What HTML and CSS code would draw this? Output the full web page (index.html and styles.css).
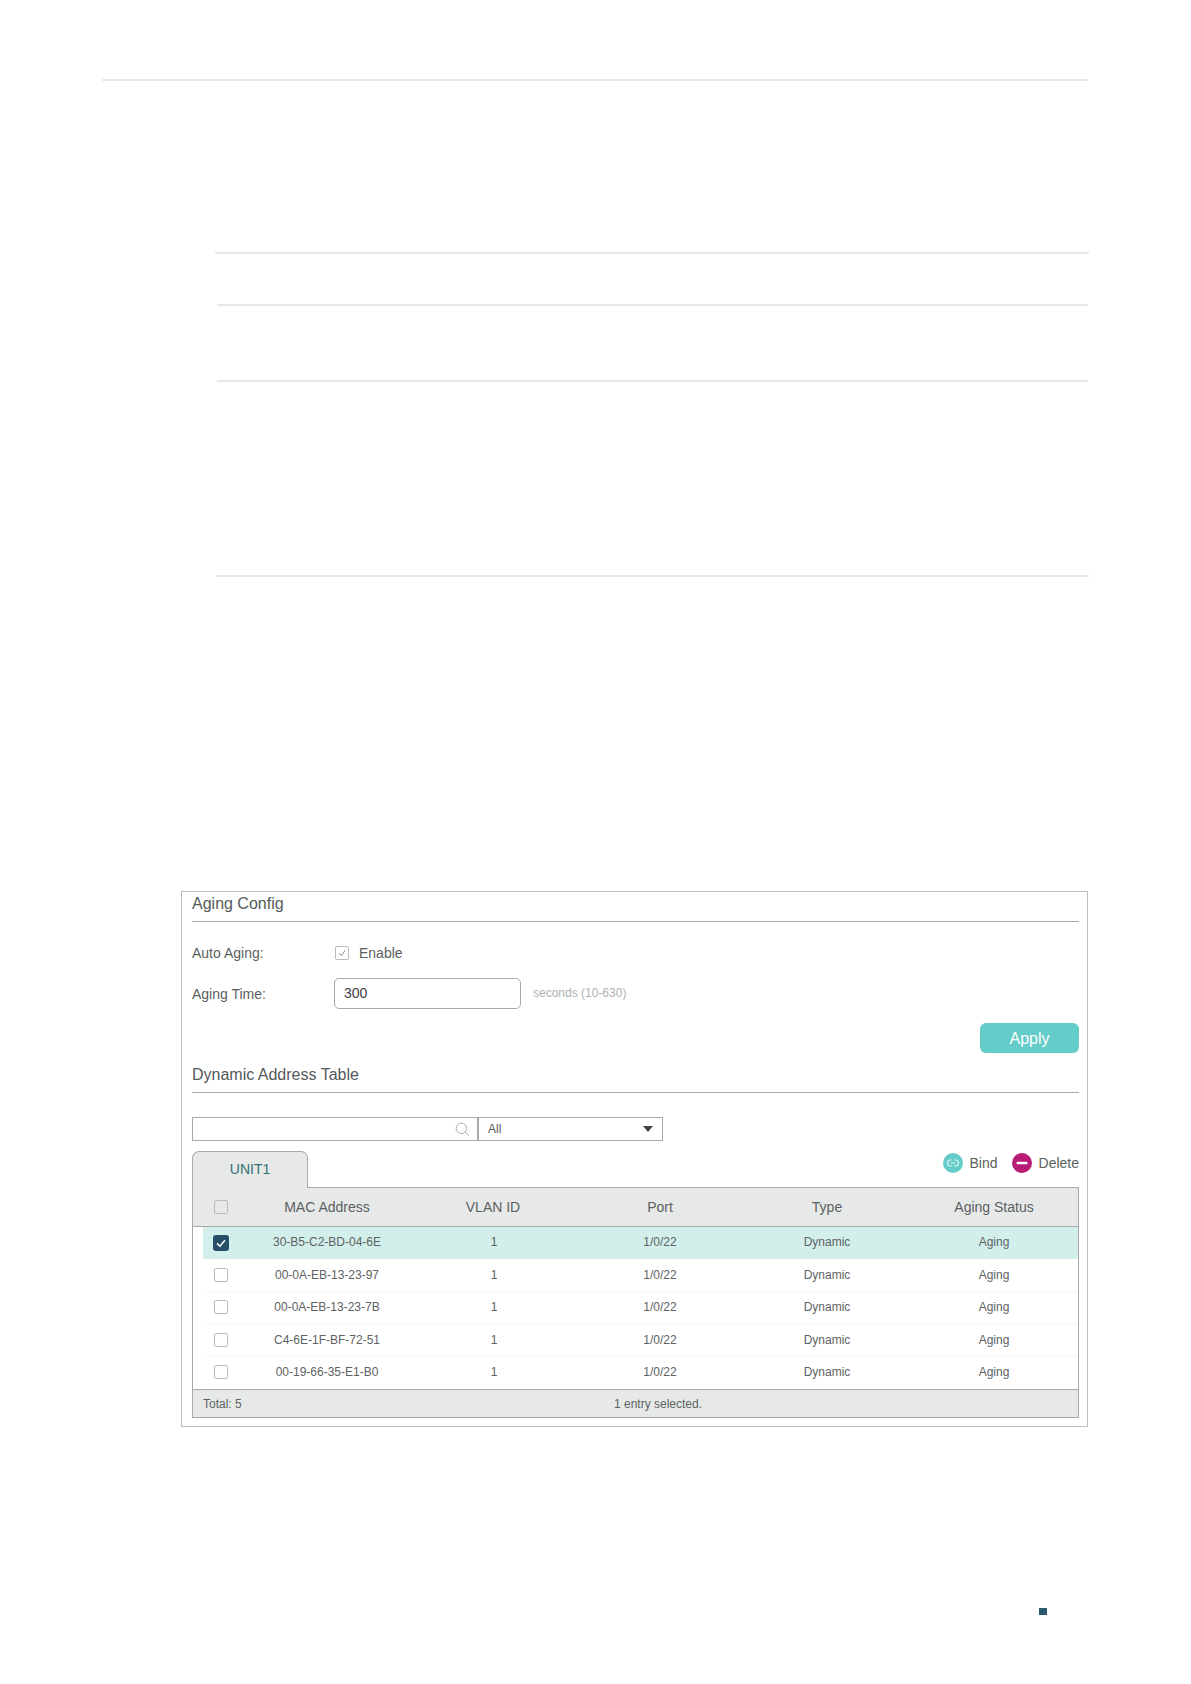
FILE: index.html
```html
<!DOCTYPE html>
<html lang="en">
<head>
<meta charset="utf-8">
<title>Aging Config</title>
<link rel="stylesheet" href="styles.css">
</head>
<body>
<div class="page">
  <div class="rule rule-top"></div>
  <div class="rule rule-a"></div>
  <div class="rule rule-b"></div>
  <div class="rule rule-c"></div>
  <div class="rule rule-d"></div>

  <section class="panel">
    <h2 class="title">Aging Config</h2>
    <div class="form-row auto-row">
      <span class="label">Auto Aging:</span>
      <span class="enable-box">
        <svg class="enable-check" viewBox="0 0 14 14"><path d="M3.5 7.2 6.2 10 10.8 3.8"/></svg>
      </span>
      <span class="enable-text">Enable</span>
    </div>
    <div class="form-row time-row">
      <span class="label">Aging Time:</span>
      <span class="input">300</span>
      <span class="hint">seconds (10-630)</span>
    </div>
    <div class="apply-row"><span class="apply">Apply</span></div>

    <h2 class="title title-second">Dynamic Address Table</h2>
    <div class="toolbar">
      <span class="search">
        <svg class="search-icon" viewBox="0 0 16 16"><circle cx="6.8" cy="6.8" r="5.6"/><path d="M10.8 10.8 15 15"/></svg>
      </span>
      <span class="select">All<span class="caret"></span></span>
    </div>
    <div class="tabs">
      <span class="tab">UNIT1</span>
      <div class="actions">
        <span class="action">
          <svg class="action-icon" viewBox="0 0 20 20"><circle class="bind-disc" cx="10" cy="10" r="10"/><path class="bind-link" d="M9 7H7.5a3 3 0 0 0 0 6H9M11 7h1.5a3 3 0 0 1 0 6H11M7.5 10h5"/></svg>
          Bind
        </span>
        <span class="action">
          <svg class="action-icon" viewBox="0 0 20 20"><circle class="delete-disc" cx="10" cy="10" r="10"/><rect class="delete-bar" x="4.5" y="8.8" width="11" height="2.4" rx="1"/></svg>
          Delete
        </span>
      </div>
    </div>

    <div class="table">
      <div class="row head">
        <span class="box"></span>
        <span>MAC Address</span><span>VLAN ID</span><span>Port</span><span>Type</span><span>Aging Status</span>
      </div>
      <div class="row body selected">
        <span class="box checked"><svg class="tick" viewBox="0 0 16 16"><path d="M4 8.4 6.9 11.2 12 5.2"/></svg></span>
        <span>30-B5-C2-BD-04-6E</span><span>1</span><span>1/0/22</span><span>Dynamic</span><span>Aging</span>
      </div>
      <div class="row body">
        <span class="box"></span>
        <span>00-0A-EB-13-23-97</span><span>1</span><span>1/0/22</span><span>Dynamic</span><span>Aging</span>
      </div>
      <div class="row body">
        <span class="box"></span>
        <span>00-0A-EB-13-23-7B</span><span>1</span><span>1/0/22</span><span>Dynamic</span><span>Aging</span>
      </div>
      <div class="row body">
        <span class="box"></span>
        <span>C4-6E-1F-BF-72-51</span><span>1</span><span>1/0/22</span><span>Dynamic</span><span>Aging</span>
      </div>
      <div class="row body last">
        <span class="box"></span>
        <span>00-19-66-35-E1-B0</span><span>1</span><span>1/0/22</span><span>Dynamic</span><span>Aging</span>
      </div>
      <div class="foot">
        <span>Total: 5</span><span>1 entry selected.</span>
      </div>
    </div>
  </section>

  <div class="page-mark"></div>
</div>
</body>
</html>
```
FILE: styles.css
```css
* { box-sizing: border-box; }

html, body { margin: 0; padding: 0; background: #fff; }

.page {
  width: 1191px;
  height: 1684px;
  padding-top: 79px;
  font-family: "Liberation Sans", Arial, sans-serif;
  color: #5a5f60;
  overflow: hidden;
}

.rule { height: 2px; background: #e4e8e8; }
.rule-top { margin-left: 102px; width: 986px; }
.rule-a { margin: 171px 0 0 215px; width: 874px; }
.rule-b { margin: 50px 0 0 217px; width: 871px; }
.rule-c { margin: 74px 0 0 217px; width: 871px; }
.rule-d { margin: 193px 0 0 216px; width: 873px; }

.panel {
  margin: 314px 0 0 181px;
  width: 907px;
  height: 536px;
  border: 1px solid #bbbcbc;
  padding: 0 8px 0 10px;
}

.title {
  margin: 0;
  height: 30px;
  font-size: 16px;
  font-weight: 400;
  line-height: 24px;
  color: #55595a;
  border-bottom: 1px solid #a9abab;
}
.title-second { margin-top: 10px; }

.form-row { display: flex; align-items: center; font-size: 14px; }
.label { width: 142px; flex: none; }
.auto-row { height: 20px; margin-top: 21px; }
.time-row { height: 31px; margin-top: 15px; }

.enable-box {
  width: 14px;
  height: 14px;
  margin-left: 1px;
  border: 1px solid #b7bbbb;
  border-radius: 2px;
}
.enable-check { display: block; width: 12px; height: 12px; fill: none; stroke: #6f7879; stroke-width: 1; }
.enable-text { margin-left: 10px; }

.input {
  width: 187px;
  height: 31px;
  padding-left: 9px;
  border: 1px solid #a8aaaa;
  border-radius: 5px;
  line-height: 29px;
  color: #3c4041;
}
.hint { margin: -2px 0 0 12px; font-size: 12px; color: #aeb1b1; }

.apply-row { display: flex; justify-content: flex-end; margin-top: 14px; }
.apply {
  width: 99px;
  height: 30px;
  border-radius: 6px;
  background: #64ccc9;
  color: #fff;
  font-size: 16px;
  line-height: 32px;
  text-align: center;
}

.toolbar { display: flex; margin-top: 24px; font-size: 12px; }
.search {
  display: flex;
  align-items: center;
  justify-content: flex-end;
  width: 286px;
  height: 24px;
  padding-right: 7px;
  border: 1px solid #a8aaaa;
}
.search-icon { width: 15px; height: 15px; fill: none; stroke: #a5a9a9; stroke-width: 1; }
.select {
  display: flex;
  align-items: center;
  justify-content: space-between;
  width: 185px;
  height: 24px;
  padding: 0 9px;
  border: 1px solid #a8aaaa;
  color: #55595a;
}
.caret {
  width: 0;
  height: 0;
  border-left: 5px solid transparent;
  border-right: 5px solid transparent;
  border-top: 6px solid #3d4344;
}

.tabs { display: flex; justify-content: space-between; margin-top: 10px; height: 36px; }
.tab {
  width: 116px;
  height: 37px;
  border: 1px solid #a8aaaa;
  border-bottom: 0;
  border-radius: 7px 7px 0 0;
  background: #e7e9e9;
  color: #2f7175;
  font-size: 14px;
  line-height: 35px;
  text-align: center;
  position: relative;
  z-index: 1;
}
.actions { display: flex; gap: 14px; padding-top: 2px; }
.action { display: flex; align-items: flex-start; gap: 7px; height: 20px; font-size: 14px; line-height: 20px; }
.action-icon { width: 20px; height: 20px; flex: none; }
.bind-disc { fill: #64ccc9; }
.bind-link { fill: none; stroke: #d6f2f1; stroke-width: 1.2; }
.delete-disc { fill: #b81c76; }
.delete-bar { fill: #fff; }

.table { width: 887px; border: 1px solid #a8aaaa; height: 231px; }

.row {
  display: grid;
  grid-template-columns: 56px 156px 176px 158px 176px 158px;
  align-items: center;
  text-align: center;
}
.head {
  height: 39px;
  background: #e7e9e9;
  border-bottom: 1px solid #a8aaaa;
  font-size: 14px;
}
.body {
  height: 32.4px;
  margin-left: 10px;
  grid-template-columns: 46px 156px 178px 154px 180px 154px;
  font-size: 12px;
  border-bottom: 1px solid #f5f7f7;
  color: #5d6263;
}
.body.last { border-bottom: 0; padding-bottom: 2px; }
.selected { background: #d2efeb; border-bottom: 0; padding-bottom: 2px; }

.box {
  display: block;
  width: 14px;
  height: 14px;
  margin-left: 21px;
  border: 1px solid #b9bcbc;
  border-radius: 2px;
  background: #fff;
}
.head .box { background: transparent; }
.body .box { margin-left: 11px; }
.body .box.checked {
  width: 16px;
  height: 16px;
  margin-left: 10px;
  border: 0;
  border-radius: 3px;
  background: #264e66;
}
.selected .box { margin-top: 2px; }
.tick { display: block; width: 16px; height: 16px; fill: none; stroke: #fff; stroke-width: 1.5; }

.foot {
  display: grid;
  grid-template-columns: 411px auto;
  align-items: center;
  height: 28px;
  padding: 2px 0 0 10px;
  background: #e7e9e9;
  border-top: 1px solid #a8aaaa;
  font-size: 12px;
  color: #5d6263;
}

.page-mark { margin: 181px 0 0 1039px; width: 8px; height: 7px; background: #2b5a6e; }
```
